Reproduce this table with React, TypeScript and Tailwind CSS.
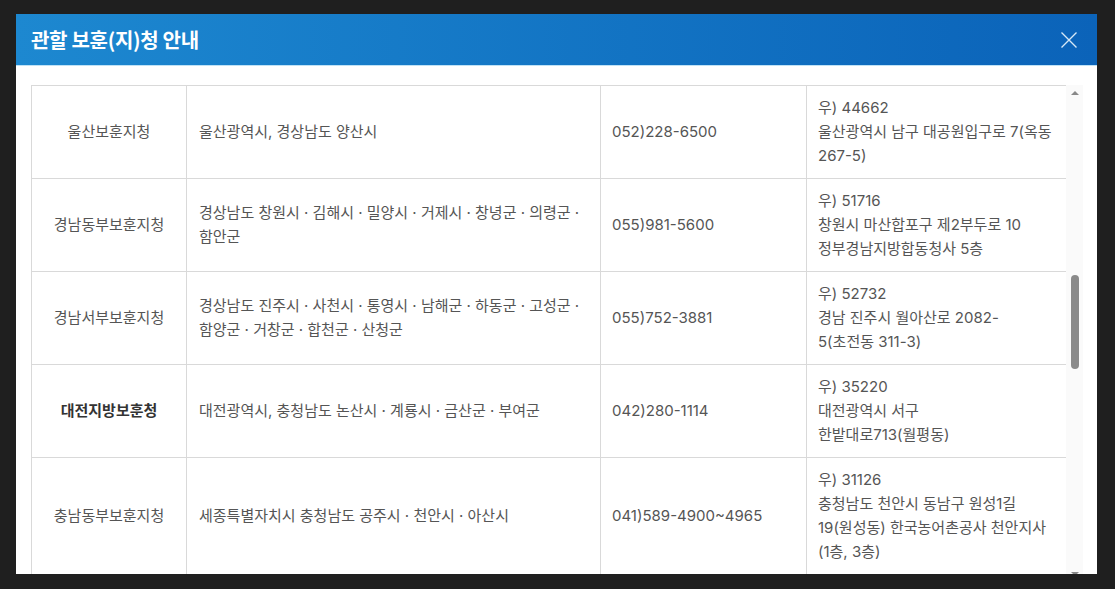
import React from "react";

type Office = {
  name: string;
  area: string[];
  phone: string;
  address: string[];
  bold?: boolean;
};

const offices: Office[] = [
  {
    name: "울산보훈지청",
    area: ["울산광역시, 경상남도 양산시"],
    phone: "052)228-6500",
    address: ["우) 44662", "울산광역시 남구 대공원입구로 7(옥동", "267-5)"],
  },
  {
    name: "경남동부보훈지청",
    area: ["경상남도 창원시 · 김해시 · 밀양시 · 거제시 · 창녕군 · 의령군 ·", "함안군"],
    phone: "055)981-5600",
    address: ["우) 51716", "창원시 마산합포구 제2부두로 10", "정부경남지방합동청사 5층"],
  },
  {
    name: "경남서부보훈지청",
    area: ["경상남도 진주시 · 사천시 · 통영시 · 남해군 · 하동군 · 고성군 ·", "함양군 · 거창군 · 합천군 · 산청군"],
    phone: "055)752-3881",
    address: ["우) 52732", "경남 진주시 월아산로 2082-", "5(초전동 311-3)"],
  },
  {
    name: "대전지방보훈청",
    area: ["대전광역시, 충청남도 논산시 · 계룡시 · 금산군 · 부여군"],
    phone: "042)280-1114",
    address: ["우) 35220", "대전광역시 서구", "한밭대로713(월평동)"],
    bold: true,
  },
  {
    name: "충남동부보훈지청",
    area: ["세종특별자치시 충청남도 공주시 · 천안시 · 아산시"],
    phone: "041)589-4900~4965",
    address: ["우) 31126", "충청남도 천안시 동남구 원성1길", "19(원성동) 한국농어촌공사 천안지사", "(1층, 3층)"],
  },
];

const Lines: React.FC<{ lines: string[] }> = ({ lines }) => (
  <>
    {lines.map((l, i) => (
      <div key={i} className="whitespace-nowrap">
        {l}
      </div>
    ))}
  </>
);

export default function App() {
  return (
    <div
      className="w-[1115px] h-[589px] bg-[#1f1f1f] pt-[14px] pl-[16px] overflow-hidden"
      style={{ fontFamily: 'Inter, "Noto Sans CJK KR", "Noto Sans", sans-serif' }}
    >
      <div className="w-[1081px] h-[560px] bg-white flex flex-col overflow-hidden">
        {/* header */}
        <div className="h-[52px] shrink-0 flex items-center justify-between pl-[15px] pr-[19px] bg-gradient-to-r from-[#1d88d0] to-[#0b63b9] border-b border-[#bfe2f6]">
          <h2
            className="text-[20px] font-bold text-white tracking-[-0.3px]"
            style={{ fontFamily: '"Noto Sans CJK KR", sans-serif' }}
          >
            관할 보훈(지)청 안내
          </h2>
          <svg width="18" height="18" viewBox="0 0 18 18" className="text-[#d6e8f7]">
            <path d="M1.5 1.5 L16.5 16.5 M16.5 1.5 L1.5 16.5" stroke="currentColor" strokeWidth="1.4" fill="none" />
          </svg>
        </div>

        {/* body */}
        <div className="flex-1 flex pt-[19px] pl-[15px] overflow-hidden">
          <div className="w-[1035px] shrink-0 overflow-hidden">
            <table className="w-[1035px] table-fixed border-collapse text-[15px] leading-[24px] text-[#555]">
              <colgroup>
                <col className="w-[155px]" />
                <col className="w-[414px]" />
                <col className="w-[206px]" />
                <col className="w-[260px]" />
              </colgroup>
              <tbody>
                {offices.map((o) => (
                  <tr key={o.name} className="h-[93px]">
                    <td
                      className={`border border-[#d9d9d9] text-center align-middle py-[10px] ${
                        o.bold ? "font-bold text-[#333]" : ""
                      }`}
                    >
                      {o.name}
                    </td>
                    <td className="border border-[#d9d9d9] align-middle px-[12px] py-[10px]">
                      <Lines lines={o.area} />
                    </td>
                    <td className="border border-[#d9d9d9] align-middle px-[11px] py-[10px]">{o.phone}</td>
                    <td className="border border-[#d9d9d9] align-middle px-[11px] py-[10px]">
                      <Lines lines={o.address} />
                    </td>
                  </tr>
                ))}
              </tbody>
            </table>
          </div>

          {/* scrollbar */}
          <div className="w-[17px] shrink-0 flex flex-col items-center bg-[#fafafa]">
            <div className="mt-[6px] w-0 h-0 border-l-[4px] border-r-[4px] border-b-[4px] border-l-transparent border-r-transparent border-b-[#888]" />
            <div className="mt-[180px] w-[8px] h-[94px] rounded-full bg-[#8a8a8a]" />
            <div className="mt-auto mb-[-2px] w-0 h-0 border-l-[4px] border-r-[4px] border-t-[4px] border-l-transparent border-r-transparent border-t-[#888]" />
          </div>
        </div>
      </div>
    </div>
  );
}
